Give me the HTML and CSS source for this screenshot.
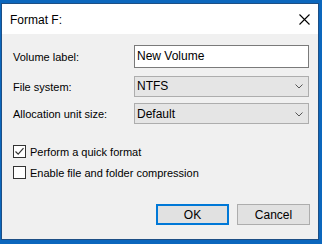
FILE: index.html
```html
<!DOCTYPE html>
<html>
<head>
<meta charset="utf-8">
<link rel="stylesheet" href="styles.css">
</head>
<body>
<div class="window">
  <div class="titlebar">
    <span class="title">Format F:</span>
    <svg class="close" width="11" height="11" viewBox="0 0 11 11"><path d="M0.5 0.5 L10.5 10.5 M10.5 0.5 L0.5 10.5" stroke="#000" stroke-width="1.1" fill="none"/></svg>
  </div>
  <div class="content">
    <div class="form">
      <label class="lbl">Volume label:</label>
      <div class="input">New Volume</div>
      <label class="lbl">File system:</label>
      <div class="select"><span>NTFS</span><svg width="8" height="5" viewBox="0 0 8 5"><path d="M0.5 0.5 L4 4 L7.5 0.5" stroke="#555" fill="none"/></svg></div>
      <label class="lbl">Allocation unit size:</label>
      <div class="select"><span>Default</span><svg width="8" height="5" viewBox="0 0 8 5"><path d="M0.5 0.5 L4 4 L7.5 0.5" stroke="#555" fill="none"/></svg></div>
    </div>
    <div class="checks">
      <div class="check"><span class="box"><svg width="11" height="11" viewBox="0 0 11 11"><path d="M1.5 5.5 L4.2 8.2 L9.5 2.2" stroke="#333" stroke-width="1.2" fill="none"/></svg></span>Perform a quick format</div>
      <div class="check"><span class="box"></span>Enable file and folder compression</div>
    </div>
    <div class="buttons">
      <div class="btn default">OK</div>
      <div class="btn">Cancel</div>
    </div>
  </div>
</div>
</body>
</html>
```
FILE: styles.css
```css
html, body {
  margin: 0;
  padding: 0;
}
body {
  width: 322px;
  height: 244px;
  background: #0c67bd;
  font-family: "Liberation Sans", Arial, sans-serif;
  font-size: 11px;
  color: #000;
  overflow: hidden;
}
.window {
  margin: 3px 0 0 1px;
  width: 316px;
  height: 235px;
  border: 1px solid #1d4f85;
  background: #f0f0f0;
  display: flex;
  flex-direction: column;
}
.titlebar {
  height: 30px;
  background: #fff;
  display: flex;
  align-items: center;
  justify-content: space-between;
  padding: 0 8px 0 8px;
  flex: none;
}
.title {
  font-size: 12px;
  padding-top: 1px;
}
.close {
  margin-right: 0;
  margin-top: 1px;
}
.content {
  padding: 11px 8px 0 11px;
  display: flex;
  flex-direction: column;
}
.form {
  display: grid;
  grid-template-columns: 121px 175px;
  grid-template-rows: 23px 21px 21px;
  row-gap: 7px;
  align-items: center;
}
.form > :nth-child(3), .form > :nth-child(4) { margin-top: 1px; }
.lbl {
  padding-top: 1px;
}
.input {
  height: 21px;
  border: 1px solid #7a7a7a;
  background: #fff;
  padding-left: 2px;
  line-height: 21px;
  font-size: 12px;
}
.select {
  height: 19px;
  border: 1px solid #adadad;
  background: #e5e5e5;
  display: flex;
  align-items: center;
  justify-content: space-between;
  padding: 0 5px 0 2px;
  font-size: 12px;
}
.select svg { margin-top: 1px; }
.checks {
  margin-top: 21px;
  display: flex;
  flex-direction: column;
  gap: 8px;
}
.check {
  display: flex;
  align-items: center;
  height: 13px;
  font-size: 11px;
}
.box {
  width: 11px;
  height: 11px;
  border: 1px solid #333;
  background: #fff;
  margin-right: 4px;
  display: flex;
}
.buttons {
  margin-top: 25px;
  display: flex;
  justify-content: flex-end;
  gap: 8px;
}
.btn {
  width: 71px;
  height: 19px;
  border: 1px solid #adadad;
  background: #e1e1e1;
  display: flex;
  align-items: center;
  justify-content: center;
  font-size: 12px;
}
.btn.default {
  width: 69px;
  height: 17px;
  border: 2px solid #0078d7;
}
```
